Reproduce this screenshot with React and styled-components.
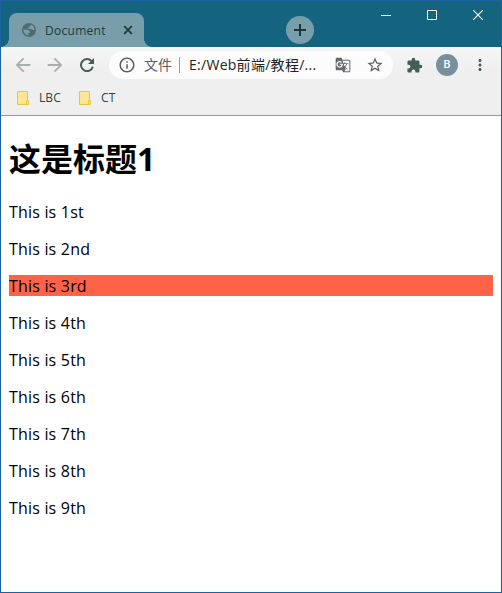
import React from "react";
import styled, { createGlobalStyle } from "styled-components";
import {
  MdArrowBack, MdArrowForward, MdInfoOutline,
  MdGTranslate, MdStarBorder, MdExtension, MdMoreVert,
} from "react-icons/md";

const GlobalStyle = createGlobalStyle`
  * { box-sizing: border-box; }
  body { margin: 0; font-family: "Open Sans", "Noto Sans CJK SC", sans-serif; }
  svg { display: block; flex: none; }
`;

const Window = styled.div`
  width: 502px;
  height: 593px;
  border: 1px solid #1b63a0;
  background: #fff;
  display: flex;
  flex-direction: column;
  overflow: hidden;
`;

const TitleBar = styled.header`
  height: 46px;
  flex: none;
  display: flex;
  background: #14637f;
`;

const Tab = styled.div`
  position: relative;
  width: 135px;
  height: 34px;
  margin: 12px 0 0 8px;
  padding: 0 11px 0 13px;
  border-radius: 8px 8px 0 0;
  background: #789eab;
  display: flex;
  align-items: center;
  color: #1f3b38;

  &::before, &::after {
    content: "";
    position: absolute;
    bottom: 0;
    width: 8px;
    height: 8px;
  }
  &::before {
    left: -8px;
    background: radial-gradient(circle at 0 0, transparent 7.5px, #789eab 8px);
  }
  &::after {
    right: -8px;
    background: radial-gradient(circle at 100% 0, transparent 7.5px, #789eab 8px);
  }
`;

const TabTitle = styled.span`
  flex: 1;
  margin: 2px 0 0 9px;
  font-size: 12px;
  line-height: 16px;
  letter-spacing: 0.28px;
`;

const NewTab = styled.button`
  width: 28px;
  height: 28px;
  margin: 15px 0 0 142px;
  padding: 0;
  border: 0;
  border-radius: 50%;
  background: #789eab;
  display: grid;
  place-items: center;
`;

const Controls = styled.div`
  height: 28px;
  margin-left: auto;
  display: flex;
`;

const ControlButton = styled.button`
  width: 46px;
  height: 28px;
  padding: 0;
  border: 0;
  background: none;
  display: grid;
  place-items: center;
`;

const Chrome = styled.div`
  height: 69px;
  flex: none;
  border-bottom: 1px solid #999;
  background: linear-gradient(#f6f6f6, #efefef 24px);
`;

const Toolbar = styled.div`
  height: 36px;
  display: flex;
  align-items: center;
`;

const ToolButton = styled.span`
  width: ${(p) => p.$width || 32}px;
  display: grid;
  place-items: center;
  color: ${(p) => p.$color || "#445f58"};
`;

const Nav = styled.div`
  display: flex;
  margin: 0 6px 0 6px;
`;

const AddressBar = styled.div`
  width: 284px;
  height: 28px;
  padding-left: 9px;
  border-radius: 14px;
  background: #fcfcfc;
  display: flex;
  align-items: center;
  color: #5a5e60;
`;

const Scheme = styled.span`
  margin-left: 8px;
  font-size: 14px;
  line-height: 20px;
`;

const Divider = styled.span`
  width: 1px;
  height: 16px;
  margin: 0 9px 0 7px;
  background: #999;
`;

const Url = styled.span`
  flex: 1;
  font-size: 14px;
  line-height: 20px;
  letter-spacing: 0.28px;
  white-space: nowrap;
  color: #222;
`;

const Avatar = styled.span`
  width: 22px;
  height: 22px;
  border-radius: 50%;
  background: #78909c;
  color: #fff;
  font: 500 11px/22px Roboto, sans-serif;
  text-align: center;
`;

const Bookmarks = styled.nav`
  height: 30px;
  padding-left: 16px;
  display: flex;
  align-items: center;
`;

const Bookmark = styled.a`
  width: 62px;
  display: flex;
  align-items: center;
  gap: 10px;
  font-size: 12px;
  line-height: 16px;
  letter-spacing: 0.1px;
  color: #294643;
`;

const Page = styled.main`
  padding: 0 8px;
`;

const Heading = styled.h1`
  height: 43px;
  margin: 21px 0 21px;
  font: 700 32px/43px "Open Sans", "Noto Sans CJK SC", sans-serif;
  color: #000;
`;

const Line = styled.p`
  height: 21px;
  margin: 0 0 16px;
  font-size: 16px;
  line-height: 23px;
  letter-spacing: 0.19px;
  color: #000;
  background: ${(p) => (p.$highlighted ? "#ff6347" : "transparent")};
`;

const Stroke = ({ size, d, color, width = 1 }) => (
  <svg width={size} height={size} viewBox={`0 0 ${size} ${size}`} fill="none" stroke={color} strokeWidth={width}>
    <path d={d} />
  </svg>
);

const Globe = () => (
  <svg width="14" height="14" viewBox="0 0 14 14">
    <circle cx="7" cy="7" r="7" fill="#506b68" />
    <path
      d="M8.7 1.6C11 2.3 12.5 4.4 12.5 7H10.8C9.8 7 9.7 6 8.8 6H6.2V4.6H7.5V3H8.7ZM1.5 6.6H4.8C6.3 6.6 6.5 8.2 8 8.2V9.8H6.3V12.4C3.6 12.2 1.3 10 1.5 6.6Z"
      fill="#789eab"
    />
  </svg>
);

const Reload = () => (
  <svg width="14" height="14" viewBox="0 0 14 14">
    <path d="M11.6 3.2A6 6 0 1 0 12.8 8.7" fill="none" stroke="#445f58" strokeWidth="2" />
    <path d="M14 0V6H8Z" fill="#445f58" />
  </svg>
);

const Folder = () => (
  <svg width="12" height="14" viewBox="0 0 12 14" fill="#ffe694" stroke="#e9c545">
    <path d="M.5.5h10v13H.5z" />
    <path d="M9.5 9.5h2v4h-2z" />
  </svg>
);

const ordinals = ["1st", "2nd", "3rd", "4th", "5th", "6th", "7th", "8th", "9th"];

export default function App() {
  return (
    <Window>
      <GlobalStyle />
      <TitleBar>
        <Tab>
          <Globe />
          <TabTitle>Document</TabTitle>
          <Stroke size={10} d="M1.2 1.2 8.8 8.8M8.8 1.2 1.2 8.8" color="#20403c" width={1.9} />
        </Tab>
        <NewTab>
          <Stroke size={12} d="M6 0V12M0 6H12" color="#1b3833" width={2} />
        </NewTab>
        <Controls>
          <ControlButton><Stroke size={10} d="M0 5.5H10" color="#fff" /></ControlButton>
          <ControlButton><Stroke size={10} d="M.5.5h9v9h-9z" color="#fff" /></ControlButton>
          <ControlButton><Stroke size={10} d="M.2.2 9.8 9.8M9.8.2.2 9.8" color="#fff" width={1.1} /></ControlButton>
        </Controls>
      </TitleBar>
      <Chrome>
        <Toolbar>
          <Nav>
            <ToolButton $color="#a6b1ae"><MdArrowBack size={22} /></ToolButton>
            <ToolButton $color="#a6b1ae"><MdArrowForward size={22} /></ToolButton>
            <ToolButton><Reload /></ToolButton>
          </Nav>
          <AddressBar>
            <MdInfoOutline size={18} />
            <Scheme>文件</Scheme>
            <Divider />
            <Url>E:/Web前端/教程/...</Url>
            <ToolButton $width={28}><MdGTranslate size={16} color="#666a6c" /></ToolButton>
            <ToolButton $width={36}><MdStarBorder size={18} color="#5a5e60" /></ToolButton>
          </AddressBar>
          <ToolButton $width={43}><MdExtension size={17} /></ToolButton>
          <Avatar>B</Avatar>
          <ToolButton $width={43}><MdMoreVert size={18} /></ToolButton>
        </Toolbar>
        <Bookmarks>
          <Bookmark><Folder />LBC</Bookmark>
          <Bookmark><Folder />CT</Bookmark>
        </Bookmarks>
      </Chrome>
      <Page>
        <Heading>这是标题1</Heading>
        {ordinals.map((ordinal) => (
          <Line key={ordinal} $highlighted={ordinal === "3rd"}>This is {ordinal}</Line>
        ))}
      </Page>
    </Window>
  );
}
